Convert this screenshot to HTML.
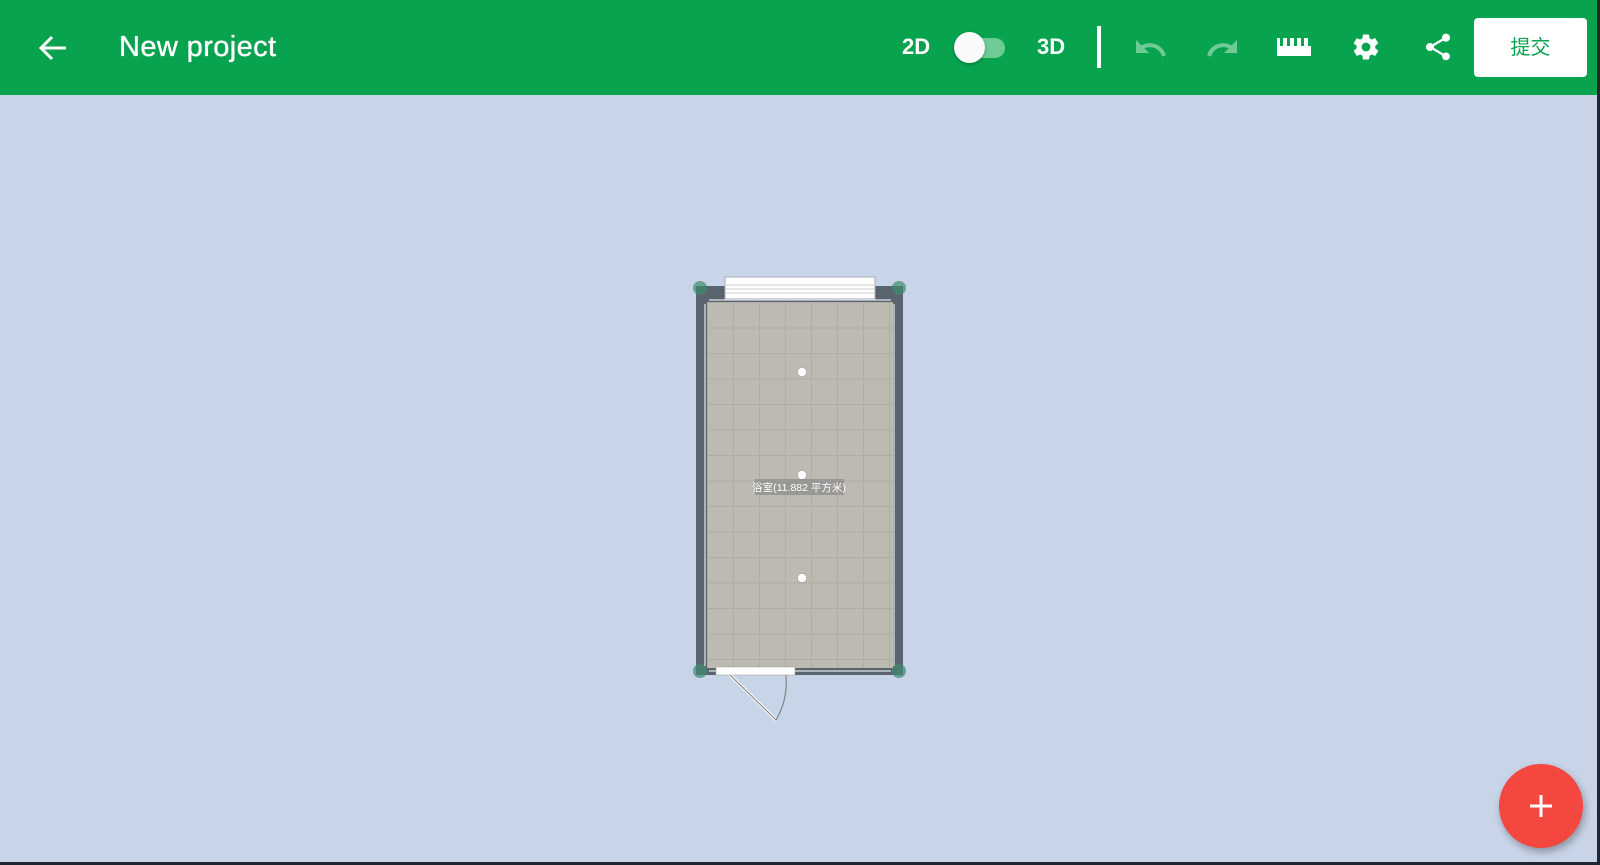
<!DOCTYPE html>
<html><head><meta charset="utf-8"><style>
html,body{margin:0;padding:0;width:1600px;height:865px;overflow:hidden;background:#1f2630}
#app{position:absolute;left:0;top:0;width:1597px;height:862px;background:#c8d4e8;overflow:hidden}
#hdr{position:absolute;left:0;top:0;width:100%;height:95px;background:#07a34f;font-family:"Liberation Sans",sans-serif;color:#fff}
.t{position:absolute;top:29px;left:119px;font-size:29px;line-height:36px;letter-spacing:.4px;text-shadow:0 0 .6px #fff,0 0 .6px #fff}
.lbl{position:absolute;top:33px;font-size:22px;font-weight:bold;line-height:28px}
.ic{position:absolute}
.btn{position:absolute;left:1474px;top:18px;width:113px;height:59px;background:#fff;border-radius:4px;color:#07a34f;font-family:"Liberation Sans","Noto Sans CJK SC",sans-serif;font-size:20px;line-height:61px;text-align:center}
.fab{position:absolute;left:1499px;top:764px;width:84px;height:84px;border-radius:50%;background:#f44740;box-shadow:2px 4px 8px rgba(0,0,0,.3)}
</style></head><body><div id="app">
<div id="hdr">
<svg class="ic" style="left:38px;top:34px" width="30" height="28" viewBox="0 0 30 28"><path d="M28 14H4M14 3L3 14l11 11" stroke="#fff" stroke-width="3" fill="none"/></svg>
<div class="t">New project</div>
<div class="lbl" style="left:902px">2D</div>
<div style="position:absolute;left:957px;top:38px;width:48px;height:20px;border-radius:10px;background:#6fcb95"></div>
<div style="position:absolute;left:954px;top:32px;width:31px;height:31px;border-radius:50%;background:#fafafa;box-shadow:0 1px 3px rgba(0,0,0,.3)"></div>
<div class="lbl" style="left:1037px">3D</div>
<div style="position:absolute;left:1097px;top:26px;width:4px;height:42px;background:#fff"></div>
<svg class="ic" style="left:1133px;top:36px" width="34" height="22" viewBox="0 0 34 22"><path d="M31 20C28 10 17 6 8 12" stroke="#6fcb95" stroke-width="4" fill="none"/><path d="M3 4v13h13z" fill="#6fcb95"/></svg>
<svg class="ic" style="left:1206px;top:36px" width="34" height="22" viewBox="0 0 34 22"><path d="M3 20C6 10 17 6 26 12" stroke="#6fcb95" stroke-width="4" fill="none"/><path d="M31 4v13H18z" fill="#6fcb95"/></svg>
<svg class="ic" style="left:1277px;top:38px" width="34" height="18" viewBox="0 0 34 18"><path d="M0 0h3v8h3V0h4v8h3V0h4v8h3V0h4v8h3V0h4v8h3V0h0v18H0z" fill="#fff"/><rect x="0" y="8" width="34" height="10" fill="#fff"/></svg>
<svg class="ic" style="left:1351px;top:32px" width="30" height="30" viewBox="0 0 24 24"><path fill="#fff" d="M19.4 13c.04-.33.06-.66.06-1s-.02-.67-.06-1l2.1-1.650c.2-.15.24-.42.12-.64l-2-3.46c-.12-.22-.39-.3-.61-.22l-2.49 1c-.52-.4-1.080-.73-1.69-.98l-.38-2.65A.49.49 0 0 0 14 2h-4c-.25 0-.46.18-.49.42l-.38 2.65c-.61.25-1.17.59-1.69.98l-2.49-1c-.23-.09-.49 0-.61.22l-2 3.46c-.13.22-.07.49.12.64L4.56 11c-.04.33-.06.67-.06 1s.02.67.06 1l-2.1 1.65c-.2.15-.24.42-.12.64l2 3.46c.12.22.39.3.61.22l2.49-1c.52.4 1.08.73 1.69.98l.38 2.65c.03.24.24.42.49.42h4c.25 0 .46-.18.49-.42l.38-2.65c.61-.25 1.17-.59 1.69-.98l2.49 1c.23.09.49 0 .61-.22l2-3.46c.12-.22.07-.49-.12-.64L19.4 13zM12 15.5A3.5 3.5 0 1 1 12 8.5a3.5 3.5 0 0 1 0 7z"/></svg>
<svg class="ic" style="left:1422px;top:30px" width="32" height="34" viewBox="0 0 24 24"><path fill="#fff" d="M18 16.08c-.76 0-1.44.3-1.96.77L8.91 12.7c.05-.23.09-.46.09-.7s-.04-.47-.09-.7l7.05-4.11A2.99 2.99 0 0 0 21 5a3 3 0 1 0-5.910.7L8.04 9.81A2.99 2.99 0 0 0 3 12a3 3 0 0 0 5.04 2.19l7.12 4.16c-.05.21-.08.43-.08.65A2.92 2.92 0 1 0 18 16.08z"/></svg>
<div class="btn">提交</div>
</div>
<svg style="position:absolute;left:0;top:0" width="1597" height="862">
<defs><pattern id="tile" x="707" y="302" width="78" height="25.5" patternUnits="userSpaceOnUse"><rect width="78" height="25.5" fill="#bdbab1"/><path d="M0 .5H78M.5 0V25.5M26.5 0V25.5M52.5 0V25.5" stroke="#b0ada4" stroke-width="1"/></pattern></defs>
<rect x="696" y="286" width="207" height="389" fill="#5a6470"/>
<rect x="707" y="302" width="186" height="366" fill="url(#tile)"/>
<circle cx="700" cy="288" r="7" fill="#3f8a6e" opacity=".7"/><circle cx="899" cy="288" r="7" fill="#3f8a6e" opacity=".7"/>
<circle cx="700" cy="671" r="7" fill="#3f8a6e" opacity=".7"/><circle cx="899" cy="671" r="7" fill="#3f8a6e" opacity=".7"/>
<rect x="725" y="277" width="150" height="22" fill="#fff" stroke="#aab" stroke-width="1"/>
<path d="M725 285H875M725 289H875M725 293H875" stroke="#ccc"/>
<path d="M709 300H891M705 304V666M894 304V666M709 671H891" stroke="#fff" stroke-width="1"/>
<rect x="716" y="667" width="79" height="8" fill="#fff" stroke="#999" stroke-width=".5"/>
<path d="M730 675L776 720" stroke="#fff" stroke-width="3"/><path d="M730 675L776 720" stroke="#777" stroke-width="1" fill="none"/>
<path d="M776 720Q788 700 786 675" stroke="#777" stroke-width="1" fill="none"/>
<circle cx="802" cy="372" r="4.5" fill="#fff" stroke="#999" stroke-width=".5"/>
<circle cx="802" cy="475" r="4.5" fill="#fff" stroke="#999" stroke-width=".5"/>
<circle cx="802" cy="578" r="4.5" fill="#fff" stroke="#999" stroke-width=".5"/>
<rect x="755" y="479" width="89" height="16" fill="#9a9894"/>
<text x="799" y="491" font-size="10.5" fill="#fff" text-anchor="middle" font-family="Liberation Sans,Noto Sans CJK SC,sans-serif">浴室(11.882 平方米)</text>
</svg>
<div class="fab"><svg style="position:absolute;left:29px;top:29px" width="26" height="26"><path d="M13 2V24M2 13H24" stroke="#fff" stroke-width="3"/></svg></div>
</div></body></html>
